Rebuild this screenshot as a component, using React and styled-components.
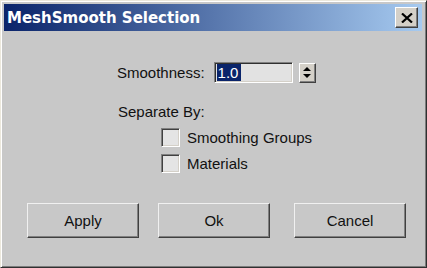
import React from "react";
import styled, { createGlobalStyle } from "styled-components";

const GlobalStyle = createGlobalStyle`
  html, body {
    margin: 0;
    padding: 0;
    background: #c8c8c8;
  }
`;

const Window = styled.div`
  width: 427px;
  height: 268px;
  box-sizing: border-box;
  background: #c8c8c8;
  border: 1px solid;
  border-color: #ece8dc #303030 #303030 #ece8dc;
  box-shadow: inset 1px 1px #ffffff, inset -1px -1px #7c7c7c;
  padding: 3px 4px 4px 3px;
  display: flex;
  flex-direction: column;
  font-family: "Liberation Sans", Arial, sans-serif;
  font-size: 15px;
  color: #111;
`;

const TitleBar = styled.div`
  height: 27px;
  flex-shrink: 0;
  display: flex;
  align-items: center;
  justify-content: space-between;
  padding: 0 4px 0 3px;
  background: linear-gradient(to right, #0a246a, #a6caf0);
`;

const Title = styled.span`
  font-family: "DejaVu Sans", Verdana, sans-serif;
  font-weight: bold;
  font-size: 15px;
  color: #ffffff;
`;

const CloseButton = styled.div`
  width: 23px;
  height: 21px;
  box-sizing: border-box;
  background: #d4d0c8;
  border: 1px solid;
  border-color: #ffffff #404040 #404040 #ffffff;
  box-shadow: inset -1px -1px #808080;
  display: flex;
  align-items: center;
  justify-content: center;
`;

const Body = styled.div`
  flex: 1;
  display: flex;
  flex-direction: column;
  padding: 31px 0 0 0;
`;

const Form = styled.div`
  display: flex;
  flex-direction: column;
  padding-left: 113px;
`;

const FieldRow = styled.div`
  display: flex;
  align-items: center;
  height: 21px;
`;

const Label = styled.span`
  line-height: 17px;
`;

const Field = styled.div`
  margin-left: 9px;
  width: 79px;
  height: 21px;
  box-sizing: border-box;
  background: #e2e2e2;
  border: 1px solid;
  border-color: #808080 #ffffff #ffffff #808080;
  box-shadow: inset 1px 1px #303030, inset -1px -1px #d4d0c8;
  display: flex;
  align-items: center;
  padding-left: 2px;
`;

const Selected = styled.span`
  background: #0a246a;
  color: #ffffff;
  padding: 0 3px 0 1px;
  line-height: 17px;
`;

const Spinner = styled.div`
  margin-left: 6px;
  width: 17px;
  height: 20px;
  box-sizing: border-box;
  background: #d4d0c8;
  border: 1px solid;
  border-color: #ffffff #404040 #404040 #ffffff;
  box-shadow: inset -1px -1px #808080;
  display: flex;
  flex-direction: column;
  align-items: center;
  justify-content: center;
  gap: 3px;
`;

const Arrow = styled.div`
  width: 0;
  height: 0;
  border-left: 4px solid transparent;
  border-right: 4px solid transparent;
  ${(p) =>
    p.$down
      ? "border-top: 4px solid #000;"
      : "border-bottom: 4px solid #000;"}
`;

const SectionLabel = styled.div`
  margin-top: 20px;
  margin-left: 1px;
  line-height: 17px;
`;

const CheckList = styled.div`
  display: flex;
  flex-direction: column;
  gap: 7px;
  margin-top: 8px;
  padding-left: 44px;
`;

const CheckRow = styled.label`
  display: flex;
  align-items: center;
  gap: 7px;
`;

const Box = styled.span`
  width: 19px;
  height: 19px;
  box-sizing: border-box;
  background: #e4e4e4;
  border: 1px solid;
  border-color: #808080 #ffffff #ffffff #808080;
  box-shadow: inset 1px 1px #404040, inset -1px -1px #d4d0c8;
`;

const ButtonRow = styled.div`
  display: flex;
  margin-top: 30px;
  padding-left: 23px;
  gap: 19px;
`;

const Button = styled.div`
  width: 112px;
  height: 35px;
  box-sizing: border-box;
  margin-left: ${(p) => p.$shift || 0}px;
  background: #c8c8c8;
  border: 1px solid;
  border-color: #f0f0f0 #404040 #404040 #f0f0f0;
  box-shadow: inset -1px -1px #808080;
  display: flex;
  align-items: center;
  justify-content: center;
`;

function Checkbox({ label }) {
  return (
    <CheckRow>
      <Box />
      <span>{label}</span>
    </CheckRow>
  );
}

export default function App() {
  return (
    <>
      <GlobalStyle />
      <Window>
        <TitleBar>
          <Title>MeshSmooth Selection</Title>
          <CloseButton>
            <svg width="12" height="10" viewBox="0 0 12 10">
              <path d="M1 0.5 L11 9.5 M11 0.5 L1 9.5" stroke="#000" strokeWidth="2.2" />
            </svg>
          </CloseButton>
        </TitleBar>
        <Body>
          <Form>
            <FieldRow>
              <Label>Smoothness:</Label>
              <Field>
                <Selected>1.0</Selected>
              </Field>
              <Spinner>
                <Arrow />
                <Arrow $down />
              </Spinner>
            </FieldRow>
            <SectionLabel>Separate By:</SectionLabel>
            <CheckList>
              <Checkbox label="Smoothing Groups" />
              <Checkbox label="Materials" />
            </CheckList>
          </Form>
          <ButtonRow>
            <Button>Apply</Button>
            <Button>Ok</Button>
            <Button $shift={5}>Cancel</Button>
          </ButtonRow>
        </Body>
      </Window>
    </>
  );
}
